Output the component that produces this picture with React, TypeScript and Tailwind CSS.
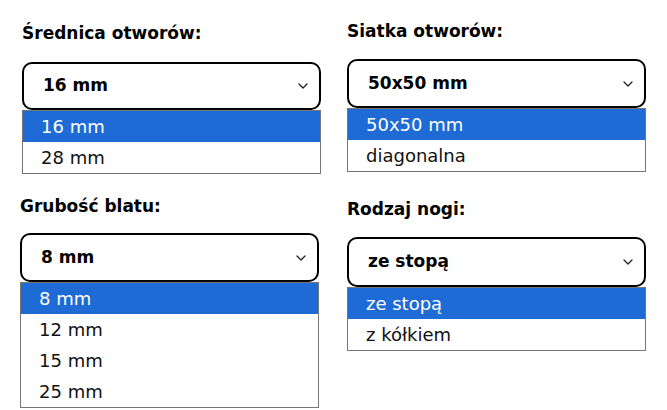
import React from 'react';

type Field = {
  label: string;
  value: string;
  options: string[];
  cell: string;
  labelGap: string;
  boxH: string;
};

const FIELDS: Field[] = [
  { label: 'Średnica otworów:', value: '16 mm', options: ['16 mm', '28 mm'], cell: 'pl-[22px] pt-[22px]', labelGap: 'mt-[18px]', boxH: 'h-[48px]' },
  { label: 'Siatka otworów:', value: '50x50 mm', options: ['50x50 mm', 'diagonalna'], cell: 'pl-[13px] pt-[20px]', labelGap: 'mt-[17px]', boxH: 'h-[49px]' },
  { label: 'Grubość blatu:', value: '8 mm', options: ['8 mm', '12 mm', '15 mm', '25 mm'], cell: 'pl-[20px] pt-[20px]', labelGap: 'mt-[16px]', boxH: 'h-[49px]' },
  { label: 'Rodzaj nogi:', value: 'ze stopą', options: ['ze stopą', 'z kółkiem'], cell: 'pl-[13px] pt-[23px]', labelGap: 'mt-[17px]', boxH: 'h-[50px]' },
];

const Chevron = () => (
  <svg width="10" height="6" viewBox="0 0 10 6" fill="none" className="shrink-0">
    <path d="M1 1l4 4 4-4" stroke="#222" strokeWidth="1.3" strokeLinecap="round" strokeLinejoin="round" />
  </svg>
);

const Select: React.FC<{ f: Field }> = ({ f }) => (
  <div className={`flex flex-col ${f.cell}`}>
    <label className="text-[17px] font-bold leading-[22px] text-black">{f.label}</label>
    <div className={`relative w-[299px] ${f.labelGap}`}>
      <div className={`${f.boxH} flex items-center justify-between rounded-[10px] border-2 border-black bg-white pl-[19px] pr-[11px]`}>
        <span className="text-[17px] font-bold text-black">{f.value}</span>
        <Chevron />
      </div>
      {/* otwarta lista opcji */}
      <ul className="absolute left-0 right-0 top-full z-10 border border-[#767676] bg-white">
        {f.options.map((o, i) => (
          <li
            key={o}
            className={`flex h-[31px] items-center pl-[18px] text-[18px] ${i === 0 ? 'bg-[#1e6bd6] text-white' : 'text-[#111]'}`}
          >
            {o}
          </li>
        ))}
      </ul>
    </div>
  </div>
);

const App: React.FC = () => {
  return (
    <div className="h-[410px] w-[667px] overflow-hidden bg-white" style={{ fontFamily: '"DejaVu Sans", "Liberation Sans", sans-serif' }}>
      <div className="grid grid-cols-[334px_333px] grid-rows-[175px_235px]">
        {FIELDS.map((f) => (
          <Select key={f.label} f={f} />
        ))}
      </div>
    </div>
  );
};

export default App;
